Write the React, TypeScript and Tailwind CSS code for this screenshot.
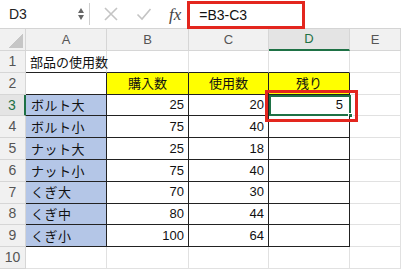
import { Fragment } from "react";

const jp = { fontFamily: '"Noto Sans CJK JP", "Noto Sans", sans-serif' };
const num = { fontFamily: '"Liberation Sans", Arial, sans-serif' };

const cols = ["A", "B", "C", "D", "E"];

type Row = { name: string; bought: number; used: number; left?: number };

const rows: Row[] = [
  { name: "ボルト大", bought: 25, used: 20, left: 5 },
  { name: "ボルト小", bought: 75, used: 40 },
  { name: "ナット大", bought: 25, used: 18 },
  { name: "ナット小", bought: 75, used: 40 },
  { name: "くぎ大", bought: 70, used: 30 },
  { name: "くぎ中", bought: 80, used: 44 },
  { name: "くぎ小", bought: 100, used: 64 },
];

function FormulaBar() {
  return (
    <div className="flex items-center h-[29px] bg-white border-b border-[#d4d4d4] relative">
      <div className="w-[78px] pl-[9px] text-[14px] text-[#222]" style={num}>
        D3
      </div>
      <div className="flex flex-col items-center gap-[2px] w-[6px]">
        <div className="w-0 h-0 border-l-[3px] border-r-[3px] border-b-[5px] border-l-transparent border-r-transparent border-b-[#666]" />
        <div className="w-0 h-0 border-l-[3px] border-r-[3px] border-t-[5px] border-l-transparent border-r-transparent border-t-[#666]" />
      </div>
      <div className="ml-[5px] w-px h-[22px] bg-[#cfcfcf]" />
      <svg className="ml-[13px]" width="16" height="16" viewBox="0 0 16 16">
        <path d="M2 2 L14 14 M14 2 L2 14" stroke="#c4c4c4" strokeWidth="1.6" fill="none" />
      </svg>
      <svg className="ml-[17px]" width="16" height="16" viewBox="0 0 16 16">
        <path d="M1.5 8.5 L6 13 L14.5 3" stroke="#c4c4c4" strokeWidth="1.6" fill="none" />
      </svg>
      <div
        className="ml-[17px] text-[17px] italic text-[#444] leading-none"
        style={{ fontFamily: '"Liberation Serif", "Times New Roman", serif' }}
      >
        fx
      </div>
      <div className="ml-[6px] h-[28px] w-[118px] border-[3px] border-[#e3261e] flex items-center pl-[9px] text-[14px] text-[#111] self-start mt-px" style={num}>
        =B3-C3
      </div>
    </div>
  );
}

function Sheet() {
  const head = "h-[22px] bg-[#f1f1f1] border-r border-b border-[#d6d6d6] flex items-center justify-center text-[13px] text-[#555]";
  const rowHead = "h-[21.8px] bg-[#f1f1f1] border-r border-b border-[#d6d6d6] flex items-center justify-center text-[14px] text-[#555]";
  const cell = "h-[21.8px] border-r border-b border-[#e1e1e1] flex items-center text-[13px] text-[#111]";

  return (
    <div className="grid grid-cols-[26px_81px_82px_80px_81px_1fr] relative">
      <div className="h-[22px] bg-[#f1f1f1] border-r border-b border-[#d6d6d6] flex items-end justify-end pr-[2px] pb-[2px]">
        <div className="w-[15px] h-[15px] shrink-0 bg-[linear-gradient(135deg,transparent_50%,#c6c6c6_50%)]" />
      </div>
      {cols.map((c) => (
        <div
          key={c}
          className={
            c === "D"
              ? "h-[22px] bg-[#e4e4e4] border-r border-b-2 border-r-[#d6d6d6] border-b-[#1e7145] flex items-center justify-center text-[13px] text-[#1e7145]"
              : head
          }
          style={num}
        >
          {c}
        </div>
      ))}

      {/* row 1 */}
      <div className={rowHead} style={num}>1</div>
      <div className={cell + " border-b-[#222] pl-[4px] whitespace-nowrap overflow-visible"} style={jp}>
        部品の使用数
      </div>
      <div className={cell + " border-b-[#222]"} />
      <div className={cell + " border-b-[#222]"} />
      <div className={cell + " border-b-[#222]"} />
      <div className={cell} />

      {/* row 2 */}
      <div className={rowHead} style={num}>2</div>
      <div className={cell + " border-r-[#222] border-b-[#222]"} />
      {["購入数", "使用数", "残り"].map((t) => (
        <div key={t} className={cell + " bg-[#ffff00] border-r-[#222] border-b-[#222] justify-center"} style={jp}>
          {t}
        </div>
      ))}
      <div className={cell} />

      {rows.map((r, i) => {
        const n = i + 3;
        const sel = n === 3;
        return (
          <Fragment key={r.name}>
            <div
              className={
                sel
                  ? "h-[21.8px] bg-[#e4e4e4] border-r-2 border-b border-r-[#1e7145] border-b-[#d6d6d6] flex items-center justify-center text-[14px] text-[#1e7145]"
                  : rowHead
              }
              style={num}
            >
              {n}
            </div>
            <div className={cell + " bg-[#b4c6e7] border-r-[#222] border-b-[#222] pl-[5px] tracking-[0.5px]"} style={jp}>
              {r.name}
            </div>
            <div className={cell + " border-r-[#222] border-b-[#222] justify-end pr-[4px]"} style={num}>
              {r.bought}
            </div>
            <div className={cell + " border-r-[#222] border-b-[#222] justify-end pr-[4px]"} style={num}>
              {r.used}
            </div>
            <div className={cell + " border-r-[#222] border-b-[#222] justify-end pr-[6px] relative"} style={num}>
              {r.left}
              {sel && (
                <>
                  <div className="absolute left-0 top-0 right-[-2px] bottom-[-1px] border-2 border-[#1e7145]" />
                  <div className="absolute right-[-4px] bottom-[-3px] w-[5px] h-[5px] bg-[#1e7145] border border-white" />
                </>
              )}
            </div>
            <div className={cell} />
          </Fragment>
        );
      })}

      {/* row 10 */}
      <div className={rowHead} style={num}>10</div>
      <div className={cell} />
      <div className={cell} />
      <div className={cell} />
      <div className={cell} />
      <div className={cell} />

      {/* annotation box around D3 */}
      <div className="absolute left-[265px] top-[61px] w-[93px] h-[32px] border-[3px] border-[#e3261e] pointer-events-none" />
    </div>
  );
}

export default function App() {
  return (
    <div className="w-[401px] h-[271px] overflow-hidden bg-white">
      <FormulaBar />
      <Sheet />
    </div>
  );
}
